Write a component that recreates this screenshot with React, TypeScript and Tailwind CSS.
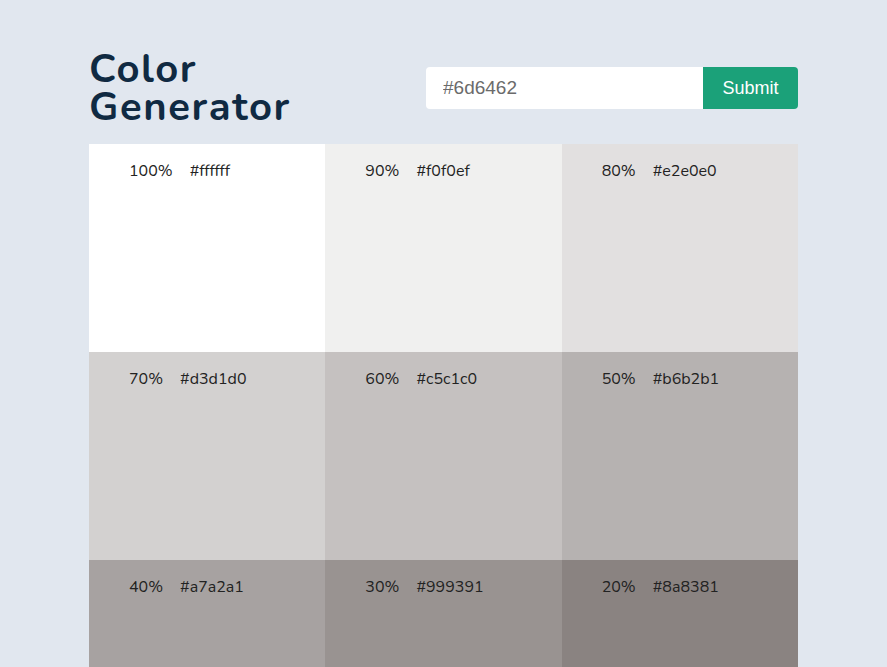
import React from "react";

const colors = [
  { w: 100, hex: "#ffffff" },
  { w: 90, hex: "#f0f0ef" },
  { w: 80, hex: "#e2e0e0" },
  { w: 70, hex: "#d3d1d0" },
  { w: 60, hex: "#c5c1c0" },
  { w: 50, hex: "#b6b2b1" },
  { w: 40, hex: "#a7a2a1" },
  { w: 30, hex: "#999391" },
  { w: 20, hex: "#8a8381" },
];

export default function App() {
  return (
    <div className="min-h-screen bg-[#e1e7ef] pt-[50px]" style={{ fontFamily: '"Nunito", "Open Sans", sans-serif' }}>
      <div className="mx-auto w-[709px]">
        <div className="flex items-center justify-between mb-[18px]">
          <h1 className="text-[40px] leading-[38px] font-bold tracking-[1.6px] text-[#102a42]">
            Color
            <br />
            Generator
          </h1>
          <form className="flex h-[42px]" onSubmit={(e) => e.preventDefault()}>
            <input
              className="w-[277px] h-[42px] bg-white rounded-l-[4px] pl-[17px] text-[19px] text-[#555] placeholder:text-[#6b6b6b] outline-none"
              style={{ fontFamily: '"Liberation Sans", Arial, sans-serif' }}
              placeholder="#6d6462"
            />
            <button
              type="submit"
              className="w-[95px] h-[42px] bg-[#1ba179] text-white text-[18px] rounded-r-[4px]"
              style={{ fontFamily: '"Liberation Sans", Arial, sans-serif' }}
            >
              Submit
            </button>
          </form>
        </div>
        <div className="grid grid-cols-3">
          {colors.map((c) => (
            <div key={c.hex} className="h-[208px] px-10 pt-[15px] text-[16px] text-[#222] leading-[24px]" style={{ backgroundColor: c.hex }}>
              <span className="mr-[17px]">{c.w}%</span>
              <span>{c.hex}</span>
            </div>
          ))}
        </div>
      </div>
    </div>
  );
}
